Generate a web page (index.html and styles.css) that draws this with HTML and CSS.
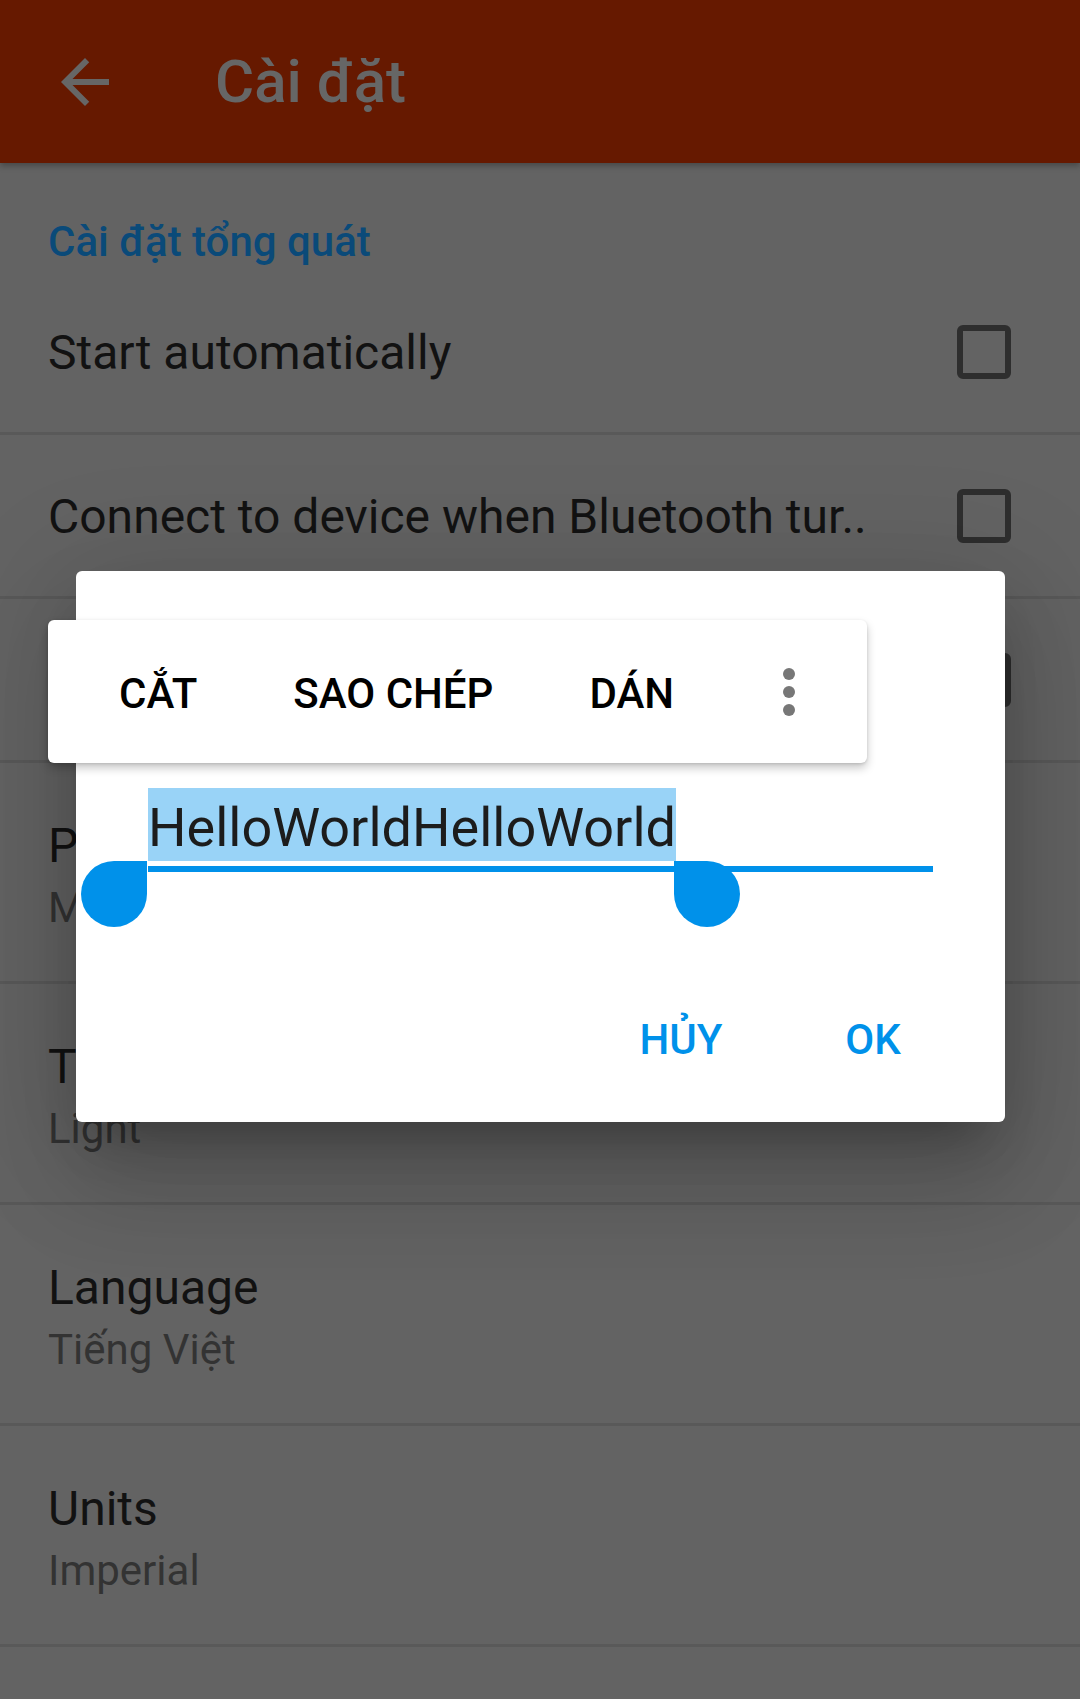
FILE: index.html
```html
<!DOCTYPE html>
<html lang="vi">
<head>
<meta charset="utf-8">
<title>Cài đặt</title>
<link rel="stylesheet" href="styles.css">
</head>
<body>
<div class="screen">
  <header class="appbar">
    <svg class="back-icon" viewBox="0 0 24 24" width="72" height="72" aria-hidden="true">
      <path d="M20 11H7.83l5.59-5.59L12 4l-8 8 8 8 1.41-1.41L7.83 13H20v-2z" fill="#666666"/>
    </svg>
    <h1 class="appbar-title">Cài đặt</h1>
  </header>

  <main class="prefs">
    <div class="category">Cài đặt tổng quát</div>

    <div class="pref pref-check">
      <span class="pref-title">Start automatically</span>
      <span class="checkbox"></span>
    </div>
    <div class="pref pref-check">
      <span class="pref-title">Connect to device when Bluetooth tur..</span>
      <span class="checkbox"></span>
    </div>
    <div class="pref pref-check">
      <span class="pref-title">Keep screen on</span>
      <span class="checkbox"></span>
    </div>

    <div class="pref pref-two">
      <div class="pref-title">Pressure unit</div>
      <div class="pref-summary">Millibar</div>
    </div>
    <div class="pref pref-two">
      <div class="pref-title">Theme</div>
      <div class="pref-summary">Light</div>
    </div>
    <div class="pref pref-two">
      <div class="pref-title">Language</div>
      <div class="pref-summary">Tiếng Việt</div>
    </div>
    <div class="pref pref-two">
      <div class="pref-title">Units</div>
      <div class="pref-summary">Imperial</div>
    </div>
    <div class="pref pref-two pref-empty"></div>
  </main>

  <div class="dialog">
    <div class="field">
      <div class="field-text"><span class="selection">HelloWorldHelloWorld</span></div>
      <div class="field-line"></div>
      <span class="handle handle-left"></span>
      <span class="handle handle-right"></span>
    </div>
    <div class="actions">
      <button class="action">HỦY</button>
      <button class="action">OK</button>
    </div>
  </div>

  <div class="text-toolbar">
    <span class="tool">CẮT</span>
    <span class="tool">SAO CHÉP</span>
    <span class="tool">DÁN</span>
    <span class="overflow">
      <svg viewBox="0 0 24 24" width="72" height="72" aria-hidden="true">
        <circle cx="12" cy="6" r="2" fill="#777777"/>
        <circle cx="12" cy="12" r="2" fill="#777777"/>
        <circle cx="12" cy="18" r="2" fill="#777777"/>
      </svg>
    </span>
  </div>
</div>
</body>
</html>
```

FILE: styles.css
```css
* { box-sizing: border-box; }

html, body {
  margin: 0;
  padding: 0;
}

body {
  width: 1080px;
  height: 1699px;
  overflow: hidden;
  background: #636363;
  font-family: Roboto, "Noto Sans", "Liberation Sans", sans-serif;
}

.screen {
  position: relative;
  width: 1080px;
  height: 1699px;
  overflow: hidden;
  background: #636363;
}

/* App bar */
.appbar {
  position: relative;
  z-index: 1;
  height: 163px;
  background: #661900;
  display: flex;
  align-items: center;
  padding-left: 49px;
  box-shadow: 0 3px 6px rgba(0, 0, 0, 0.28);
}

.back-icon {
  display: block;
  flex: none;
}

.appbar-title {
  margin: 0 0 0 94px;
  font-size: 60px;
  font-weight: 500;
  color: #666666;
  line-height: 72px;
}

/* Preference list */
.prefs {
  display: flex;
  flex-direction: column;
}

.category {
  height: 108px;
  padding: 54px 0 0 48px;
  font-size: 42px;
  font-weight: 500;
  line-height: 50px;
  color: #0a4a79;
}

.pref {
  border-bottom: 3px solid #595959;
  padding-left: 48px;
  padding-right: 69px;
}

.pref-check {
  height: 164px;
  display: flex;
  align-items: center;
  justify-content: space-between;
  padding-top: 3px;
}

.pref-check .pref-title {
  white-space: nowrap;
}

.pref-title {
  font-size: 48px;
  line-height: 56px;
  color: #121212;
}

.pref-summary {
  margin-top: 9px;
  font-size: 42px;
  line-height: 50px;
  color: #333333;
}

.pref-two {
  height: 221px;
  padding-top: 55px;
}

.checkbox {
  flex: none;
  width: 54px;
  height: 54px;
  border: 6px solid #2e2e2e;
  border-radius: 6px;
  margin-top: -3px;
}

/* Dialog */
.dialog {
  position: absolute;
  left: 76px;
  top: 571px;
  width: 929px;
  height: 551px;
  background: #ffffff;
  border-radius: 6px;
  box-shadow:
    0 33px 45px -21px rgba(0, 0, 0, 0.25),
    0 60px 100px 9px rgba(0, 0, 0, 0.12),
    0 20px 120px 20px rgba(0, 0, 0, 0.12);
  display: flex;
  flex-direction: column;
}

.field {
  position: relative;
  margin: 217px 72px 0 72px;
}

.field-text {
  height: 73px;
  line-height: 73px;
  font-size: 54px;
  color: #1c1c1c;
  white-space: nowrap;
}

.selection {
  display: inline-block;
  height: 73px;
  line-height: 79px;
  background: #99d3f7;
  vertical-align: top;
}

.field-line {
  margin-top: 5px;
  height: 6px;
  background: #0091ea;
}

.handle {
  position: absolute;
  top: 73px;
  width: 66px;
  height: 66px;
  background: #0091ea;
}

.handle-left {
  left: -67px;
  border-radius: 50% 0 50% 50%;
}

.handle-right {
  left: 526px;
  border-radius: 0 50% 50% 50%;
}

.actions {
  display: flex;
  justify-content: flex-end;
  padding: 0 36px;
  margin-top: 114px;
}

.action {
  min-width: 192px;
  height: 108px;
  padding: 0 24px;
  border: 0;
  background: transparent;
  font-family: inherit;
  font-size: 42px;
  font-weight: 500;
  line-height: 108px;
  color: #0091ea;
  text-align: center;
}

/* Floating text selection toolbar */
.text-toolbar {
  position: absolute;
  left: 48px;
  top: 620px;
  width: 819px;
  height: 143px;
  background: #ffffff;
  border-radius: 6px;
  box-shadow: 0 5px 10px rgba(0, 0, 0, 0.22), 0 1px 3px rgba(0, 0, 0, 0.12);
  display: flex;
  align-items: center;
  padding-left: 23px;
}

.tool {
  padding: 0 48px;
  font-size: 42px;
  font-weight: 500;
  line-height: 50px;
  color: #000000;
  white-space: nowrap;
  padding-top: 4px;
}

.overflow {
  display: block;
  width: 72px;
  height: 72px;
  margin-left: 31px;
}

.overflow svg {
  display: block;
}
```
